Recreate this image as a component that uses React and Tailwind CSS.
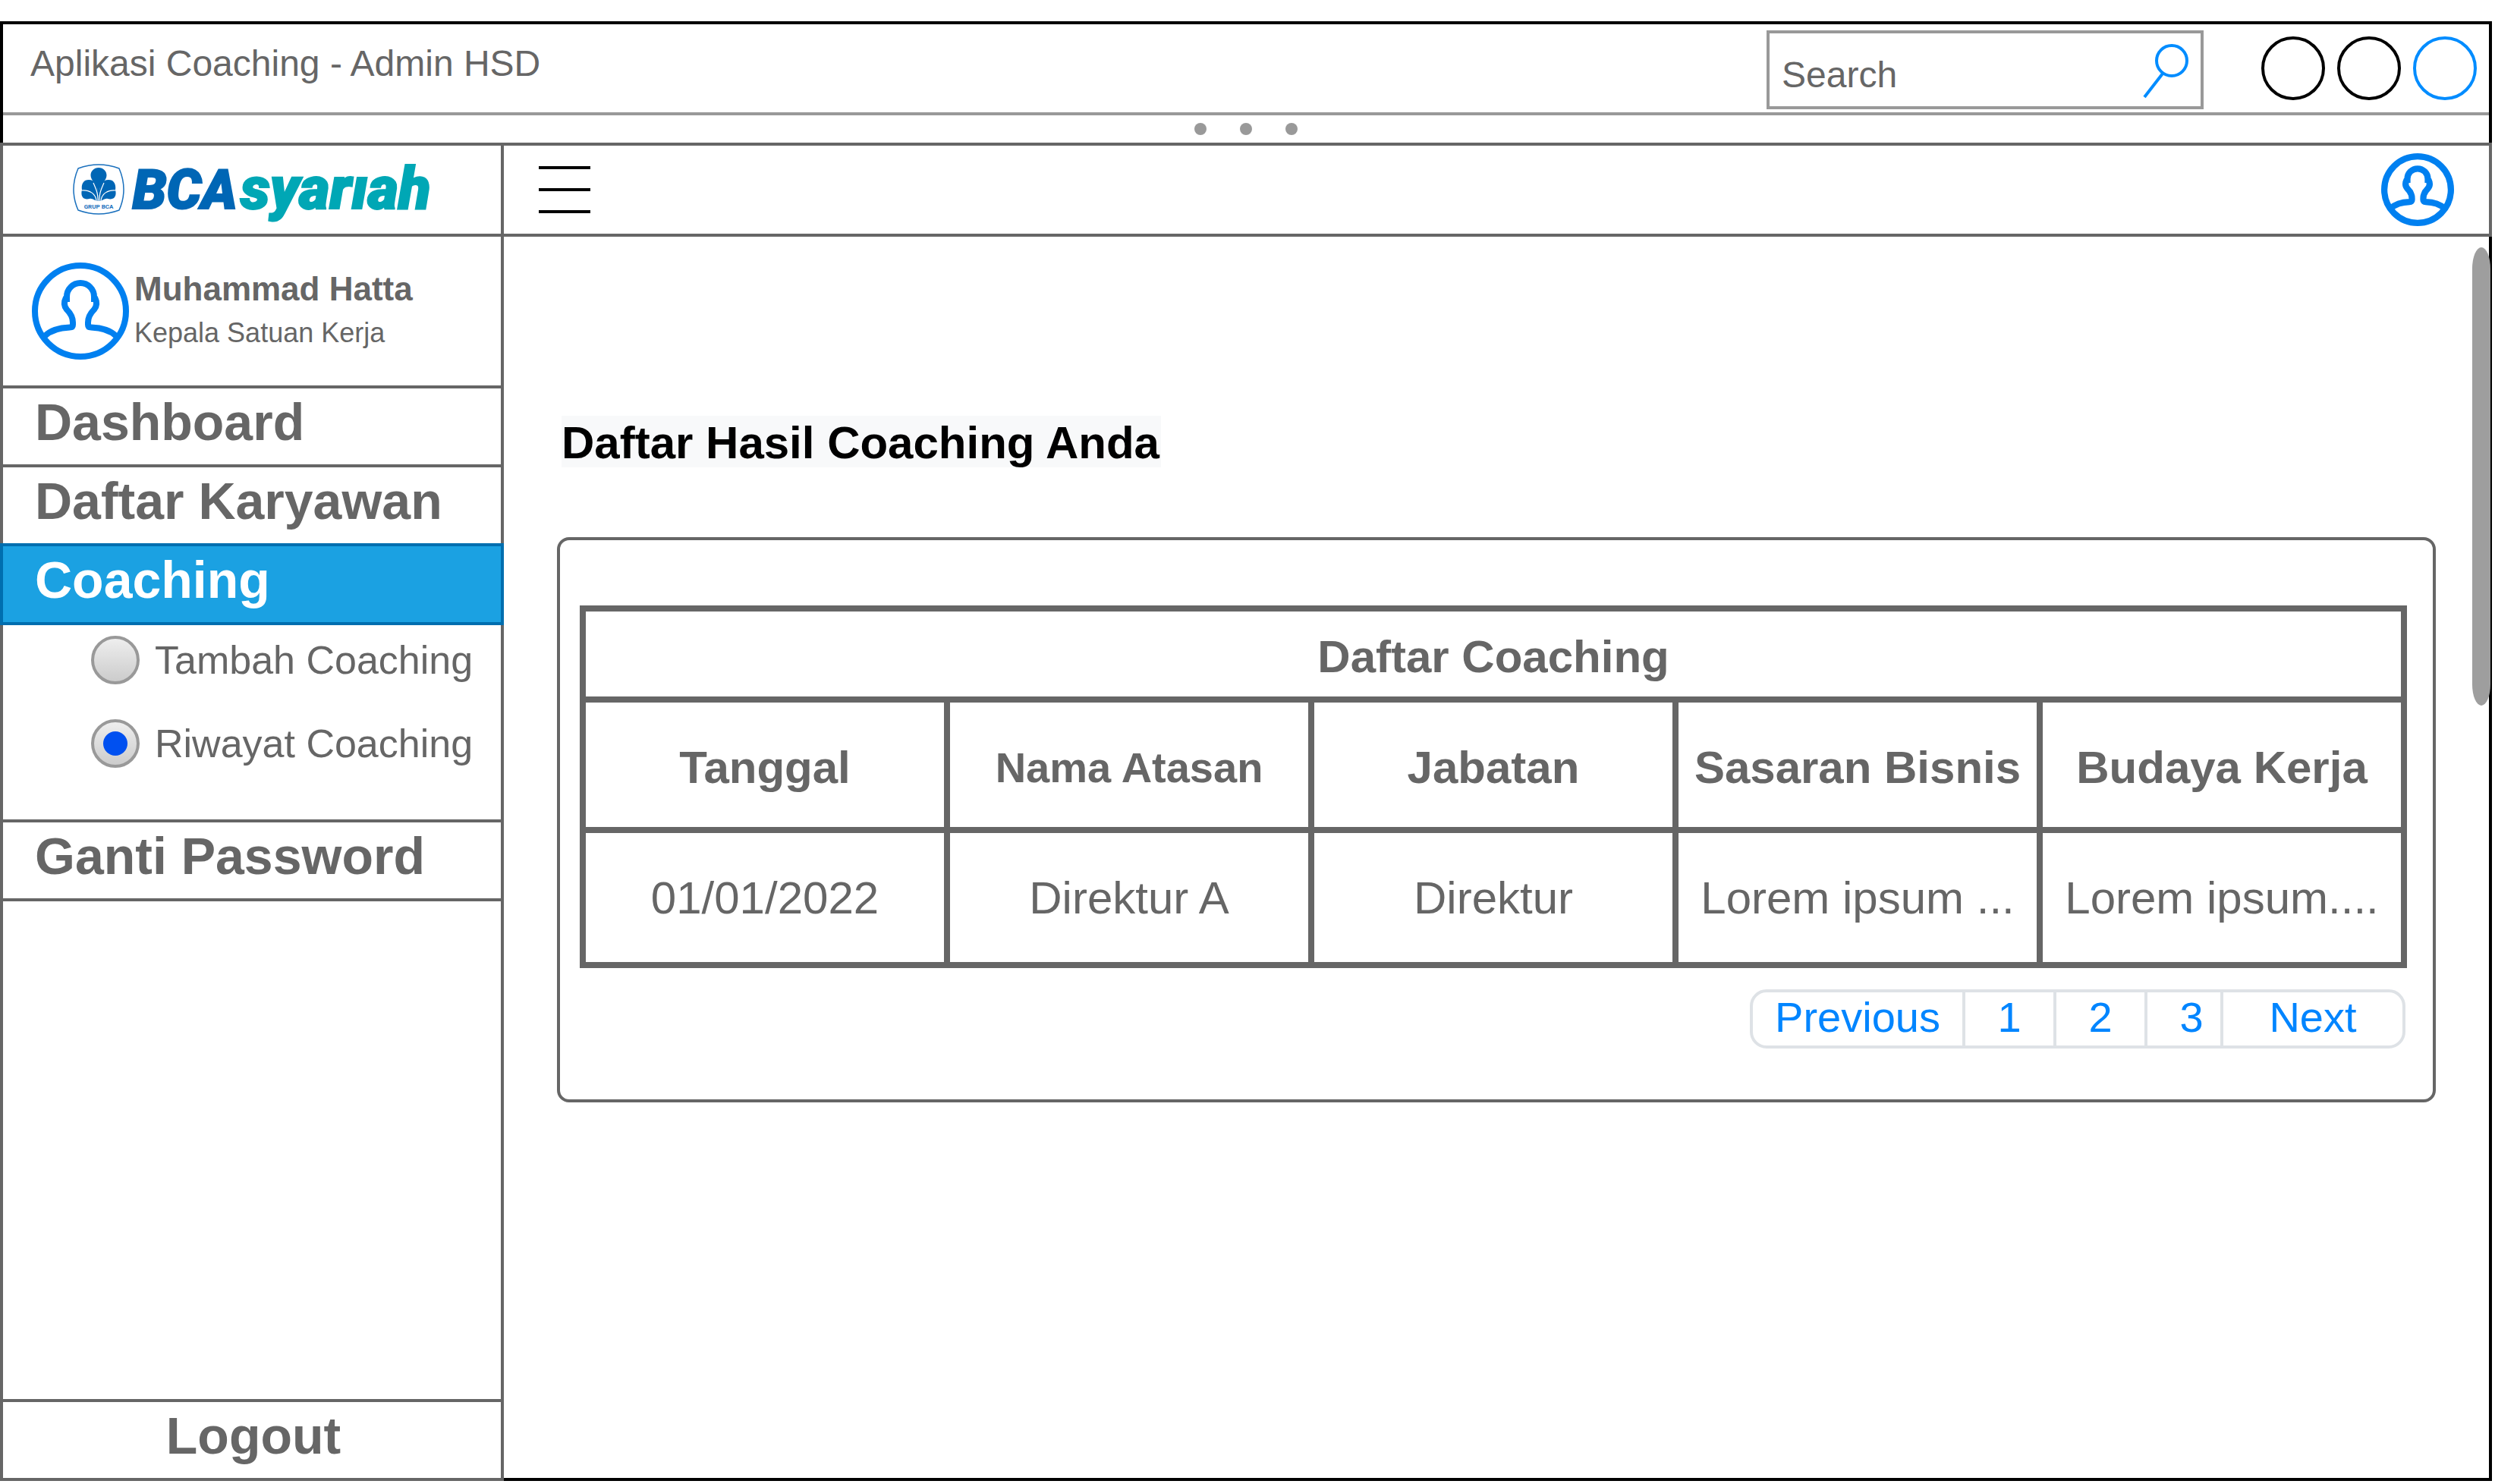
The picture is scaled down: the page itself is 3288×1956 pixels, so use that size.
const columns = [
  { label: 'Tanggal', size: 'text-[60px]' },
  { label: 'Nama Atasan', size: 'text-[56px]' },
  { label: 'Jabatan', size: 'text-[60px]' },
  { label: 'Sasaran Bisnis', size: 'text-[60px]' },
  { label: 'Budaya Kerja', size: 'text-[60px]' },
];

const rows = [['01/01/2022', 'Direktur A', 'Direktur', 'Lorem ipsum ...', 'Lorem ipsum....']];

const pages = [
  { label: 'Previous', cell: 'w-[280px] border-r-4' },
  { label: '1', cell: 'w-[120px] border-r-4' },
  { label: '2', cell: 'w-[120px] border-r-4' },
  { label: '3', cell: 'w-[100px] border-r-4 pl-5' },
  { label: 'Next', cell: 'w-[236px]' },
];

function UserIcon({ className, strokeWidth }) {
  return (
    <svg
      viewBox="0 0 128 128"
      className={className}
      fill="none"
      stroke="#0080f0"
      strokeWidth={strokeWidth}
      aria-hidden="true"
    >
      <circle cx="64" cy="64" r={64 - strokeWidth / 2} />
      <path d="M46 52V45a18 18 0 0 1 36 0V52" />
      <path d="M45 46C42 52 42.500 58 46 62C51 67 54 72 54 79V82Q54 85.500 50 85.500C36 86 25 89 17 97" />
      <path d="M83 46C86 52 85.500 58 82 62C77 67 74 72 74 79V82Q74 85.500 78 85.500C92 86 103 89 111 97" />
    </svg>
  );
}

function Logo() {
  return (
    <a href="#beranda" aria-label="BCA Syariah" className="flex items-center gap-[10px]">
      <svg viewBox="0 0 68 68" className="size-[68px]" aria-hidden="true">
        <path
          d="M7 6Q34 -4 61 6Q73 34 61 61Q34 71 7 61Q-5 34 7 6Z"
          fill="#fff"
          stroke="#1a70bd"
          strokeWidth="1.500"
        />
        <g fill="#0066b5">
          <path d="M34 5C40 5 44.500 9.500 44.500 15C44.500 22 37 26 35 34V49H33V34C31 26 23.500 22 23.500 15C23.500 9.500 28 5 34 5Z" />
          <path d="M33 49V36C33 28 29 21 21 21C13 21 11 28 12 34C10 42 13 48 22 46C26 45 29 49 33 49Z" />
          <path d="M35 49V36C35 28 39 21 47 21C55 21 57 28 56 34C58 42 55 48 46 46C42 45 39 49 35 49Z" />
        </g>
        <path
          d="M11 35C22 34 30 39 31 49M57 35C46 34 38 39 37 49M33 49C33.500 40 31 34 27 25M35 49C34.500 40 37 34 41 25"
          fill="none"
          stroke="#fff"
          strokeWidth="1.200"
        />
        <text
          x="34"
          y="59"
          textAnchor="middle"
          fontFamily="Roboto, Liberation Sans, sans-serif"
          fontSize="8"
          fontWeight="700"
          fill="#1a70bd"
        >
          GRUP BCA
        </text>
      </svg>
      <span className="flex items-baseline gap-1 font-['Roboto'] text-[72px] leading-[88px] font-black italic whitespace-nowrap">
        <span className="text-[#0066b5] [-webkit-text-stroke:2px_#0066b5]">BCA</span>
        <span className="text-[78px] text-[#00a7b5] [-webkit-text-stroke:2px_#00a7b5]">syarıah</span>
      </span>
    </a>
  );
}

function MenuItem({ label, className }) {
  return (
    <a href="#menu" className={`flex items-center border-x-4 border-t-4 pb-3 pl-[42px] text-[68px] font-bold ${className}`}>
      {label}
    </a>
  );
}

function SubMenuItem({ label, defaultChecked }) {
  return (
    <label className="flex h-16 items-center gap-5 text-[52px] whitespace-nowrap">
      <input
        type="radio"
        name="coaching"
        defaultChecked={defaultChecked}
        className="grid size-16 shrink-0 appearance-none place-items-center rounded-full border-4 border-[#999] bg-linear-to-b from-[#eee] to-[#ccc] before:size-8 before:rounded-full checked:before:bg-[#0050f0]"
      />
      {label}
    </label>
  );
}

export default function App() {
  return (
    <div className="flex min-h-screen flex-col bg-white pt-7 pr-1 pb-1 font-['Liberation_Sans',sans-serif] text-[#666]">
      <header className="flex h-[120px] items-center border-x-4 border-t-4 border-black pr-4 pl-9">
        <h1 className="pb-3 text-[48px] whitespace-nowrap">Aplikasi Coaching - Admin HSD</h1>
        <form className="mt-1 mr-[76px] ml-auto flex h-[104px] w-[576px] items-center border-4 border-[#999] px-4">
          <input
            type="search"
            aria-label="Search"
            placeholder="Search"
            className="min-w-0 flex-1 bg-transparent pt-[14px] text-[48px] outline-none placeholder:text-[#666] placeholder:opacity-100"
          />
          <button type="button" aria-label="Cari" className="pt-1">
            <svg viewBox="0 0 60 72" className="h-[72px] w-[60px]" fill="none" stroke="#008cff" strokeWidth="4">
              <circle cx="38" cy="22" r="20" />
              <path d="M26 39L2 70" />
            </svg>
          </button>
        </form>
        <div className="flex gap-4">
          <button type="button" aria-label="Minimize" className="size-[84px] rounded-full border-4 border-black" />
          <button type="button" aria-label="Maximize" className="size-[84px] rounded-full border-4 border-black" />
          <button type="button" aria-label="Close" className="size-[84px] rounded-full border-4 border-[#008cff]" />
        </div>
      </header>
      <div className="border-x-4 border-black">
        <div className="flex h-10 items-center justify-center gap-11 border-t-4 border-[#999]">
          <span className="size-4 rounded-full bg-[#999]" />
          <span className="size-4 rounded-full bg-[#999]" />
          <span className="size-4 rounded-full bg-[#999]" />
        </div>
      </div>

      <div className="flex flex-1">
        <aside className="flex w-[664px] shrink-0 flex-col">
          <div className="flex h-[120px] items-center justify-center border-x-4 border-t-4 border-[#666]">
            <Logo />
          </div>
          <div className="flex h-[200px] items-center gap-[7px] border-x-4 border-t-4 border-[#666] pl-[38px]">
            <UserIcon className="size-32" strokeWidth={8} />
            <div className="leading-[58px]">
              <p className="text-[44px] font-bold">Muhammad Hatta</p>
              <p className="text-[36px]">Kepala Satuan Kerja</p>
            </div>
          </div>
          <nav className="flex flex-1 flex-col">
            <MenuItem label="Dashboard" className="h-[104px] border-[#666]" />
            <MenuItem label="Daftar Karyawan" className="h-[104px] border-[#666]" />
            <MenuItem label="Coaching" className="h-[108px] border-b-4 border-[#006eaf] bg-[#1ba1e2] text-white" />
            <div className="flex h-64 flex-col gap-[46px] border-x-4 border-[#666] pt-[14px] pl-[116px]">
              <SubMenuItem label="Tambah Coaching" />
              <SubMenuItem label="Riwayat Coaching" defaultChecked />
            </div>
            <MenuItem label="Ganti Password" className="h-[108px] border-b-4 border-[#666]" />
            <div className="flex-1 border-x-4 border-[#666]" />
            <button
              type="button"
              className="flex h-[108px] items-center justify-center border-4 border-[#666] pb-3 pl-1 text-[68px] font-bold"
            >
              Logout
            </button>
          </nav>
        </aside>

        <div className="flex min-w-0 flex-1 flex-col">
          <div className="flex h-[124px] items-center justify-between border-y-4 border-r-4 border-[#666] px-[46px]">
            <button type="button" aria-label="Menu" className="flex w-[68px] flex-col gap-[25px]">
              <span className="h-1 bg-black" />
              <span className="h-1 bg-black" />
              <span className="h-1 bg-black" />
            </button>
            <button type="button" aria-label="Profil">
              <UserIcon className="size-24" strokeWidth={11} />
            </button>
          </div>
          <main className="relative flex-1 border-r-4 border-b-4 border-black px-[70px] pt-[236px]">
            <div className="absolute top-[14px] -right-[2px] h-[604px] w-6 rounded-[12px/28px] bg-[#9e9e9e]" />
            <h2 className="ml-[6px] w-fit bg-[#f8f9fa] pt-1 pr-0.5 text-[60px] leading-[64px] font-bold text-black">
              Daftar Hasil Coaching Anda
            </h2>
            <section className="mt-[92px] rounded-[16px] border-4 border-[#666] pt-[86px] pr-[34px] pb-[67px] pl-[26px]">
              <table className="w-full table-fixed border-collapse text-center text-[60px] leading-[68px]">
                <thead>
                  <tr className="h-[120px]">
                    <th colSpan={5} className="border-8 border-[#666] p-0 pt-2">
                      Daftar Coaching
                    </th>
                  </tr>
                  <tr className="h-[172px]">
                    {columns.map((c) => (
                      <th key={c.label} className={`border-8 border-[#666] p-0 pt-2 whitespace-nowrap ${c.size}`}>
                        {c.label}
                      </th>
                    ))}
                  </tr>
                </thead>
                <tbody>
                  {rows.map((r) => (
                    <tr key={r[0]} className="h-[178px]">
                      {r.map((v, i) => (
                        <td key={i} className="border-8 border-[#666] p-0 pt-0.5 whitespace-nowrap">
                          {v}
                        </td>
                      ))}
                    </tr>
                  ))}
                </tbody>
              </table>
              <nav
                aria-label="Halaman"
                className="mt-7 mr-0.5 ml-auto flex h-[78px] w-fit overflow-hidden rounded-[22px] border-4 border-[#dee2e6]"
              >
                {pages.map((p) => (
                  <button
                    key={p.label}
                    type="button"
                    className={`flex items-center justify-center border-[#dee2e6] pb-1 text-[56px] text-[#0085ff] ${p.cell}`}
                  >
                    {p.label}
                  </button>
                ))}
              </nav>
            </section>
          </main>
        </div>
      </div>
    </div>
  );
}
